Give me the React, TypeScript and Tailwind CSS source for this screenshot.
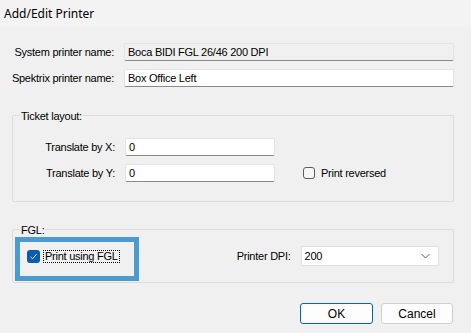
import React from "react";

const font = { fontFamily: '"Liberation Sans", Arial, sans-serif' };

function Input({ value, w, readOnly }: { value: string; w: string; readOnly?: boolean }) {
  return (
    <div
      className={`${w} h-[18px] flex items-center px-[3px] border border-[#e3e3e3] border-b-[#8a8a8a] rounded-[2px] ${
        readOnly ? "bg-[#f0f0f0]" : "bg-white"
      }`}
    >
      <span className="text-[11px] tracking-[-0.25px] text-black leading-none whitespace-nowrap">{value}</span>
    </div>
  );
}

function Label({ children }: { children: React.ReactNode }) {
  return <div className="w-[102px] shrink-0 text-right whitespace-nowrap flex justify-end">{children}</div>;
}

export default function App() {
  return (
    <div className="w-[471px] h-[333px] bg-[#f0f0f0] text-black overflow-hidden" style={font}>
      <div className="h-[27px] bg-[#f3f3f3] flex items-center px-[4px]">
        <span className="text-[12px] text-black" style={{ fontFamily: '"Noto Sans", "Open Sans", sans-serif' }}>
          Add/Edit Printer
        </span>
      </div>
      <div className="pl-[12px] pr-[17px] pt-[16px] text-[11px] tracking-[-0.25px]">
        <div className="flex items-center h-[18px]">
          <Label>System printer name:</Label>
          <div className="ml-[10px]">
            <Input value="Boca BIDI FGL 26/46 200 DPI" w="w-[330px]" readOnly />
          </div>
        </div>
        <div className="flex items-center h-[18px] mt-[8px]">
          <Label>Spektrix printer name:</Label>
          <div className="ml-[10px]">
            <Input value="Box Office Left" w="w-[330px]" />
          </div>
        </div>

        <div className="relative mt-[28px] h-[87px] border border-[#dcdcdc] rounded-[2px] pt-[22px]">
          <span className="absolute left-[7px] -top-[8px] bg-[#f0f0f0] px-[1px]">Ticket layout:</span>
          <div className="flex items-center h-[18px]">
            <Label>Translate by X:</Label>
            <div className="ml-[10px]">
              <Input value="0" w="w-[150px]" />
            </div>
          </div>
          <div className="flex items-center h-[18px] mt-[8px]">
            <Label>Translate by Y:</Label>
            <div className="ml-[10px]">
              <Input value="0" w="w-[150px]" />
            </div>
            <div className="ml-[28px] flex items-center">
              <div className="w-[12px] h-[12px] border border-[#5c5c5c] rounded-[3px] bg-[#f7f7f7]" />
              <span className="ml-[6px]">Print reversed</span>
            </div>
          </div>
        </div>

        <div className="relative mt-[27px] h-[54px] border border-[#dcdcdc] rounded-[2px] flex items-center">
          <span className="absolute left-[7px] -top-[8px] bg-[#f0f0f0] px-[1px]">FGL:</span>
          <div className="ml-[14px] flex items-center">
            <div className="w-[13px] h-[13px] rounded-[3px] bg-[#0b5cb0] flex items-center justify-center">
              <svg width="9" height="9" viewBox="0 0 9 9">
                <path d="M1.5 4.8 L3.6 6.8 L7.6 2.2" fill="none" stroke="#dfe9f5" strokeWidth="1" />
              </svg>
            </div>
            <span className="ml-[3px] border border-dotted border-black px-[1px] leading-[11px] whitespace-nowrap">Print using FGL</span>
          </div>
          <div className="ml-[117px] flex items-center">
            <span className="whitespace-nowrap">Printer DPI:</span>
            <div className="ml-[10px] w-[138px] h-[20px] bg-white border border-[#e0e0e0] rounded-[2px] flex items-center justify-between pl-[3px] pr-[8px]">
              <span>200</span>
              <svg width="9" height="6" viewBox="0 0 9 6">
                <path d="M0.5 1 L4.5 5 L8.5 1" fill="none" stroke="#606060" strokeWidth="1" />
              </svg>
            </div>
          </div>
          <div className="absolute left-[2px] top-[7px] w-[124px] h-[44px] border-[5px] border-[#4b9bd2]" />
        </div>

        <div className="flex justify-end mt-[20px] gap-[8px] pr-[1px]">
          <div className="w-[73px] h-[21px] bg-[#fdfdfd] border border-[#0067c0] rounded-[3px] flex items-center justify-center text-[12px] tracking-normal">
            OK
          </div>
          <div className="w-[72px] h-[21px] bg-[#fdfdfd] border border-[#d0d0d0] rounded-[3px] flex items-center justify-center text-[12px] tracking-normal">
            Cancel
          </div>
        </div>
      </div>
    </div>
  );
}
